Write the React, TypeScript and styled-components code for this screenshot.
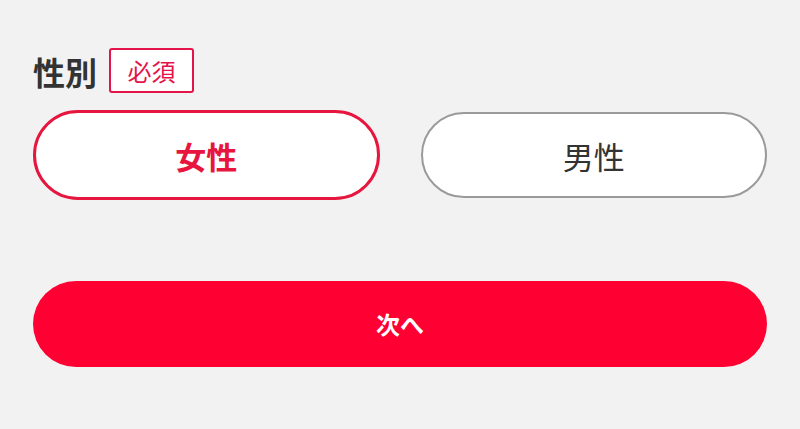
import React, { useState } from "react";
import styled, { createGlobalStyle } from "styled-components";

const Global = createGlobalStyle`
  html, body {
    margin: 0;
    padding: 0;
    background: #f2f2f2;
  }
  body {
    font-family: "Noto Sans CJK JP", "Noto Sans", sans-serif;
  }
`;

const App = () => {
  const [gender, setGender] = useState("female");
  return (
    <>
      <Global />
      <Page>
        <LabelRow>
          <Label>性別</Label>
          <Badge>必須</Badge>
        </LabelRow>
        <Choices>
          <Choice active={gender === "female"} onClick={() => setGender("female")}>
            女性
          </Choice>
          <Choice active={gender === "male"} onClick={() => setGender("male")}>
            男性
          </Choice>
        </Choices>
        <NextButton>次へ</NextButton>
      </Page>
    </>
  );
};

export default App;

const Page = styled.div`
  width: 800px;
  height: 429px;
  box-sizing: border-box;
  padding: 48px 33px 0;
  display: flex;
  flex-direction: column;
`;

const LabelRow = styled.div`
  display: flex;
  align-items: center;
  gap: 12px;
  height: 45px;
`;

const Label = styled.div`
  font-size: 32px;
  font-weight: bold;
  color: #333;
  line-height: 1;
`;

const Badge = styled.div`
  width: 85px;
  height: 45px;
  box-sizing: border-box;
  border: 2px solid #e4134a;
  border-radius: 3px;
  background: #fff;
  color: #e4134a;
  font-size: 24px;
  display: flex;
  align-items: center;
  justify-content: center;
  line-height: 1;
`;

const Choices = styled.div`
  display: grid;
  grid-template-columns: 1fr 1fr;
  align-items: center;
  gap: 41px;
  height: 90px;
  margin-top: 17px;
`;

const Choice = styled.button<{ active?: boolean }>`
  height: ${(p) => (p.active ? "90px" : "86px")};
  box-sizing: border-box;
  border-radius: 45px;
  background: #fff;
  font-family: inherit;
  font-size: 31px;
  line-height: 1;
  cursor: pointer;
  border: ${(p) => (p.active ? "3.5px solid #e6163f" : "2px solid #9a9a9a")};
  color: ${(p) => (p.active ? "#e6163f" : "#333")};
  font-weight: ${(p) => (p.active ? "bold" : "normal")};
  padding: 0;
`;

const NextButton = styled.button`
  margin-top: 81px;
  height: 86px;
  border: none;
  border-radius: 43px;
  background: #ff0033;
  color: #fff;
  font-family: inherit;
  font-size: 24px;
  font-weight: bold;
  line-height: 1;
  cursor: pointer;
`;
